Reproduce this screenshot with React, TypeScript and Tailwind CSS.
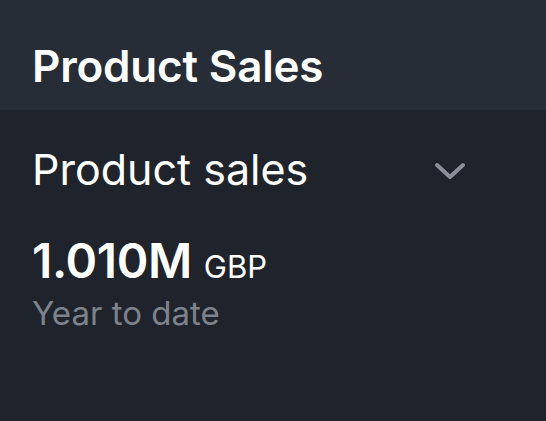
export default function App() {
  return (
    <div
      className="w-[546px] h-[421px] bg-[#1f232b] flex flex-col"
      style={{ fontFamily: 'Inter, "Noto Sans", sans-serif' }}
    >
      <div className="h-[110px] bg-[#272d36] flex items-end px-[32px] pb-[22px]">
        <h1 className="text-[44px] leading-none font-semibold text-white tracking-[-0.2px]">Product Sales</h1>
      </div>
      <div className="px-[32px] pt-[38px] flex flex-col">
        <div className="flex items-center justify-between pr-[48px]">
          <span className="text-[43px] leading-none text-white">Product sales</span>
          <svg width="32" height="20" viewBox="0 0 32 20" className="mt-[2px]">
            <path d="M3 4 L16 16 L29 4" fill="none" stroke="#8a9099" strokeWidth="4" strokeLinecap="round" strokeLinejoin="round" />
          </svg>
        </div>
        <div className="mt-[46px] flex items-baseline gap-[12px]">
          <span className="text-[48px] leading-none font-semibold text-white tracking-[-0.4px]">1.010M</span>
          <span className="text-[31px] leading-none text-white">GBP</span>
        </div>
        <span className="mt-[12px] text-[33px] leading-none text-[#7d838d]">Year to date</span>
      </div>
    </div>
  )
}
